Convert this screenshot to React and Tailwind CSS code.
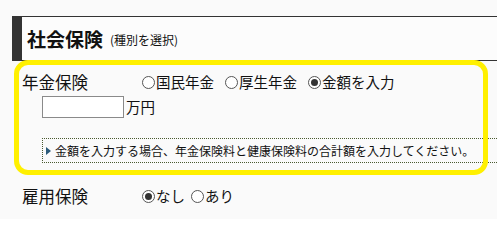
const font = { fontFamily: '"Noto Sans CJK JP", "Noto Sans", sans-serif' };

function Radio({ label, checked }) {
  return (
    <label className="flex items-center">
      <span className="w-[13px] h-[13px] rounded-full border border-[#555] bg-white flex items-center justify-center mr-[1px]">
        {checked && <span className="w-[7px] h-[7px] rounded-full bg-[#333]" />}
      </span>
      <span>{label}</span>
    </label>
  );
}

export default function App() {
  return (
    <div className="w-[497px] h-[219px] bg-[#fafafa] text-[#111] relative overflow-hidden pt-4" style={font}>
      <div className="ml-3 h-[45px] border-t border-b border-[#333] border-l-[10px] border-l-[#333] flex items-center pl-[5px] bg-[#fcfcfc]">
        <h2 className="text-[19px] font-bold leading-none">社会保険</h2>
        <span className="text-[12px] ml-[7px] mt-[3px]">(種別を選択)</span>
      </div>

      <div className="pl-[22px]">
        <div className="flex items-center h-[22px] mt-[10px]">
          <span className="w-[120px] text-[16.5px]">年金保険</span>
          <div className="flex items-center gap-[11px] text-[14.5px]">
            <Radio label="国民年金" />
            <Radio label="厚生年金" />
            <Radio label="金額を入力" checked />
          </div>
        </div>

        <div className="flex items-center ml-[20px] mt-[3px] text-[14.5px]">
          <input className="w-[82px] h-[22px] border border-[#8a8a8a] bg-white" />
          <span className="ml-[2px]">万円</span>
        </div>

        <div className="ml-[20px] mr-[-20px] mt-[20px] h-[25px] border border-dotted border-[#4a5a30] flex items-center pl-[3px] text-[12px]">
          <span className="w-0 h-0 border-y-[4px] border-y-transparent border-l-[5px] border-l-[#2a5a7a] mr-[4px]" />
          <span>金額を入力する場合、年金保険料と健康保険料の合計額を入力してください。</span>
        </div>

        <div className="flex items-center h-[22px] mt-[22px]">
          <span className="w-[120px] text-[16.5px]">雇用保険</span>
          <div className="flex items-center gap-[6px] text-[14.5px]">
            <Radio label="なし" checked />
            <Radio label="あり" />
          </div>
        </div>
      </div>

      <div className="absolute left-[14px] top-[60px] w-[474px] h-[115px] border-[5px] border-[#fff000] rounded-[14px] pointer-events-none" />
    </div>
  );
}
